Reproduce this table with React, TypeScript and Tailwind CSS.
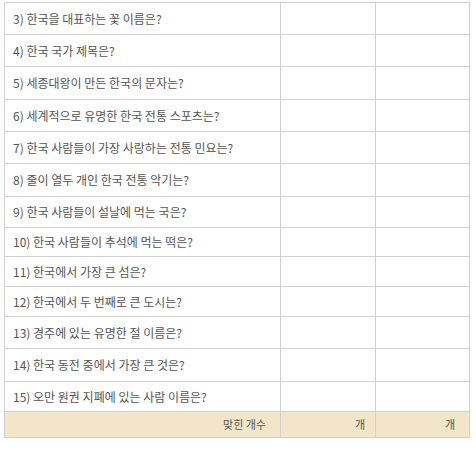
import React from "react";

const questions = [
  { q: "3) 한국을 대표하는 꽃 이름은?", h: "h-[32px]" },
  { q: "4) 한국 국가 제목은?", h: "h-[32px]" },
  { q: "5) 세종대왕이 만든 한국의 문자는?", h: "h-[33px]" },
  { q: "6) 세계적으로 유명한 한국 전통 스포츠는?", h: "h-[32px]" },
  { q: "7) 한국 사람들이 가장 사랑하는 전통 민요는?", h: "h-[32px]" },
  { q: "8) 줄이 열두 개인 한국 전통 악기는?", h: "h-[33px]" },
  { q: "9) 한국 사람들이 설날에 먹는 국은?", h: "h-[31px]" },
  { q: "10) 한국 사람들이 추석에 먹는 떡은?", h: "h-[29px]" },
  { q: "11) 한국에서 가장 큰 섬은?", h: "h-[30px]" },
  { q: "12) 한국에서 두 번째로 큰 도시는?", h: "h-[30px]" },
  { q: "13) 경주에 있는 유명한 절 이름은?", h: "h-[32px]" },
  { q: "14) 한국 동전 중에서 가장 큰 것은?", h: "h-[33px]" },
  { q: "15) 오만 원권 지폐에 있는 사람 이름은?", h: "h-[30px]" },
];

function App() {
  return (
    <div className="w-[476px] h-[450px] bg-white pt-[2px] pl-[4px] font-['Malgun_Gothic','Noto_Sans_CJK_KR',sans-serif]">
      <table className="w-[466px] border-collapse border border-[#c8c8c8] text-[12px] text-[#555]">
        <tbody>
          {questions.map((row) => (
            <tr key={row.q} className={row.h}>
              <td className="w-[276px] border border-[#d0d0d0] pl-[8px] align-middle">{row.q}</td>
              <td className="w-[95px] border border-[#d0d0d0]"></td>
              <td className="border border-[#d0d0d0]"></td>
            </tr>
          ))}
          {/* 합계 */}
          <tr className="h-[26px] bg-[#f3e5c7] text-[11px]">
            <td className="border border-[#d0d0d0] pr-[14px] text-right">맞힌 개수</td>
            <td className="border border-[#d0d0d0] pr-[10px] text-right">개</td>
            <td className="border border-[#d0d0d0] pr-[14px] text-right">개</td>
          </tr>
        </tbody>
      </table>
    </div>
  );
}

export default App;
